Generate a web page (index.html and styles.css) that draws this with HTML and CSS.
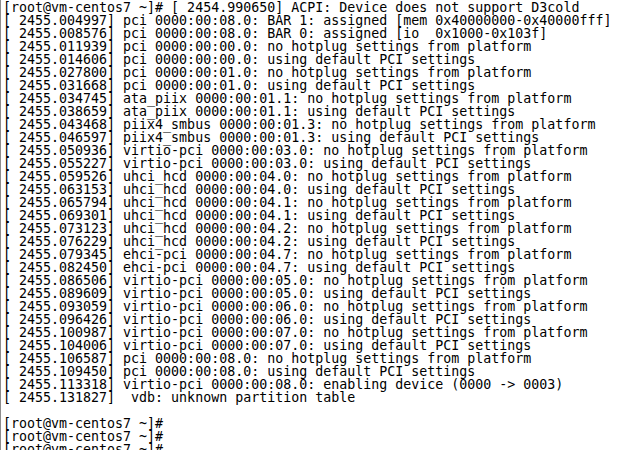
FILE: index.html
```html
<!DOCTYPE html>
<html>
<head>
<meta charset="utf-8">
<link rel="stylesheet" href="styles.css">
</head>
<body>
<div class="term"><pre class="out">[root@vm-centos7 ~]# [ 2454.990650] ACPI: Device does not support D3cold
[ 2455.004997] pci 0000:00:08.0: BAR 1: assigned [mem 0x40000000-0x40000fff]
[ 2455.008576] pci 0000:00:08.0: BAR 0: assigned [io  0x1000-0x103f]
[ 2455.011939] pci 0000:00:00.0: no hotplug settings from platform
[ 2455.014606] pci 0000:00:00.0: using default PCI settings
[ 2455.027800] pci 0000:00:01.0: no hotplug settings from platform
[ 2455.031668] pci 0000:00:01.0: using default PCI settings
[ 2455.034745] ata_piix 0000:00:01.1: no hotplug settings from platform
[ 2455.038659] ata_piix 0000:00:01.1: using default PCI settings
[ 2455.043468] piix4_smbus 0000:00:01.3: no hotplug settings from platform
[ 2455.046597] piix4_smbus 0000:00:01.3: using default PCI settings
[ 2455.050936] virtio-pci 0000:00:03.0: no hotplug settings from platform
[ 2455.055227] virtio-pci 0000:00:03.0: using default PCI settings
[ 2455.059526] uhci_hcd 0000:00:04.0: no hotplug settings from platform
[ 2455.063153] uhci_hcd 0000:00:04.0: using default PCI settings
[ 2455.065794] uhci_hcd 0000:00:04.1: no hotplug settings from platform
[ 2455.069301] uhci_hcd 0000:00:04.1: using default PCI settings
[ 2455.073123] uhci_hcd 0000:00:04.2: no hotplug settings from platform
[ 2455.076229] uhci_hcd 0000:00:04.2: using default PCI settings
[ 2455.079345] ehci-pci 0000:00:04.7: no hotplug settings from platform
[ 2455.082450] ehci-pci 0000:00:04.7: using default PCI settings
[ 2455.086506] virtio-pci 0000:00:05.0: no hotplug settings from platform
[ 2455.089609] virtio-pci 0000:00:05.0: using default PCI settings
[ 2455.093059] virtio-pci 0000:00:06.0: no hotplug settings from platform
[ 2455.096426] virtio-pci 0000:00:06.0: using default PCI settings
[ 2455.100987] virtio-pci 0000:00:07.0: no hotplug settings from platform
[ 2455.104006] virtio-pci 0000:00:07.0: using default PCI settings
[ 2455.106587] pci 0000:00:08.0: no hotplug settings from platform
[ 2455.109450] pci 0000:00:08.0: using default PCI settings
[ 2455.113318] virtio-pci 0000:00:08.0: enabling device (0000 -&gt; 0003)
[ 2455.131827]  vdb: unknown partition table

[root@vm-centos7 ~]#
[root@vm-centos7 ~]#
[root@vm-centos7 ~]#</pre></div>
</body>
</html>
```

FILE: styles.css
```css
html, body {
  margin: 0;
  padding: 0;
  background: #ffffff;
  overflow: hidden;
}
.term {
  height: 450px;
  box-sizing: border-box;
  border-left: 1px solid #8c8c8c;
  background: #ffffff;
  padding: 1px 0 0 2px;
  overflow: hidden;
}
.out {
  margin: 0;
  font-family: "DejaVu Sans Mono", monospace;
  font-size: 13.3px;
  line-height: 13px;
  color: #000000;
  white-space: pre;
}
```
